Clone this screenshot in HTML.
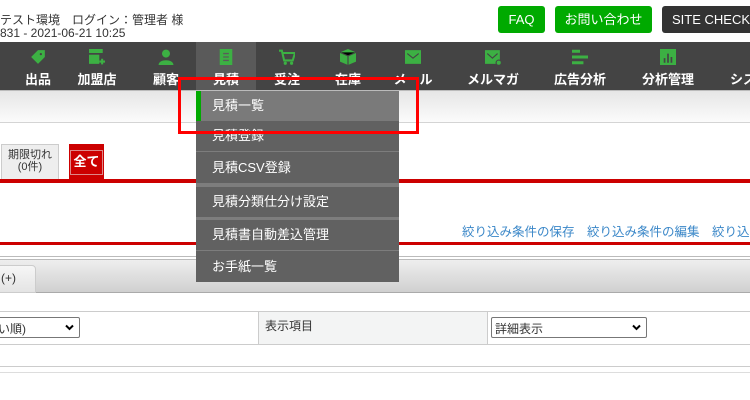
<!DOCTYPE html>
<html><head><meta charset="utf-8"><style>
*{margin:0;padding:0;box-sizing:border-box}
body{width:750px;height:400px;overflow:hidden;background:#fff;font-family:"Liberation Sans","Noto Sans CJK JP",sans-serif;position:relative;color:#333}
.a{position:absolute}
.btn{position:absolute;top:6px;height:27px;border-radius:3px;color:#fff;font-size:13px;line-height:27px;text-align:center}
.nav{position:absolute;top:42px;left:0;width:750px;height:48px;background:#444}
.ni{position:absolute;top:0;height:48px;color:#fff;font-size:13px;font-weight:bold;text-align:center}
.ni span{position:absolute;top:27px;left:0;right:0;white-space:nowrap}
.ic{position:absolute;top:7px;left:50%;margin-left:-8px;width:16px;height:16px}
.dd{position:absolute;left:196px;top:91px;width:203px;height:191px;background:#616161}
.di{position:absolute;left:0;width:203px;color:#fff;font-size:13px;padding-left:16px}
.sep{position:absolute;left:0;width:203px;background:#7d7d7d}
.chev{position:absolute;right:5px;top:6px;width:9px;height:7px}
</style></head><body>
<div class="a" style="left:0;top:11px;font-size:12px">テスト環境　ログイン：管理者 様</div>
<div class="a" style="left:0;top:26px;font-size:12px">831 - 2021-06-21 10:25</div>
<div class="btn" style="left:498px;width:47px;background:#0a0">FAQ</div>
<div class="btn" style="left:555px;width:97px;background:#0a0">お問い合わせ</div>
<div class="btn" style="left:662px;width:100px;background:#333;text-align:left;padding-left:10px">SITE CHECK</div>

<div class="nav">
<div class="ni" style="left:0;width:76px"><svg class="ic" viewBox="0 0 14 14"><path d="M1 7L7 1H13V7L7 13Z" fill="#3cb043"/><circle cx="9.5" cy="4.5" r="1" fill="#444"/></svg><span>出品</span></div>
<div class="ni" style="left:66px;width:62px"><svg class="ic" viewBox="0 0 14 14"><rect x="0" y="0" width="12" height="3.5" fill="#3cb043"/><rect x="0" y="5" width="9" height="8" fill="#3cb043"/><path d="M9 11h5M11.5 8.5v5" stroke="#3cb043" stroke-width="1.8"/></svg><span>加盟店</span></div>
<div class="ni" style="left:136px;width:60px"><svg class="ic" viewBox="0 0 14 14"><circle cx="7" cy="4" r="3.5" fill="#3cb043"/><path d="M0.5 14C0.5 8.5 13.5 8.5 13.5 14Z" fill="#3cb043"/></svg><span>顧客</span></div>
<div class="ni" style="left:196px;width:60px;background:#5a5a5a"><svg class="ic" viewBox="0 0 14 14"><rect x="1.5" y="0" width="11" height="14" fill="#3cb043"/><path d="M4.5 4h5M4.5 7h5M4.5 10h5" stroke="#5a5a5a" stroke-width="1.2"/></svg><span>見積</span></div>
<div class="ni" style="left:256px;width:62px"><svg class="ic" viewBox="0 0 14 14"><path d="M0 1.5h2.5l2 8.5h7.5l2-6.5H3.5" fill="none" stroke="#3cb043" stroke-width="1.8"/><circle cx="5.5" cy="12.5" r="1.4" fill="#3cb043"/><circle cx="11" cy="12.5" r="1.4" fill="#3cb043"/></svg><span>受注</span></div>
<div class="ni" style="left:318px;width:60px"><svg class="ic" viewBox="0 0 14 14"><path d="M7 0L14 3V11L7 14L0 11V3Z" fill="#3cb043"/><path d="M0 3L7 6L14 3M7 6V14" stroke="#444" stroke-width="1"/></svg><span>在庫</span></div>
<div class="ni" style="left:380px;width:66px"><svg class="ic" viewBox="0 0 14 14"><rect x="0" y="1" width="14" height="12" fill="#3cb043"/><path d="M2 4L7 8L12 4" fill="none" stroke="#444" stroke-width="1"/></svg><span>メール</span></div>
<div class="ni" style="left:456px;width:74px"><svg class="ic" viewBox="0 0 14 14"><rect x="0" y="1" width="13" height="12" fill="#3cb043"/><path d="M2 4L6.5 8L11 4" fill="none" stroke="#444" stroke-width="1"/><circle cx="12" cy="12" r="2.3" fill="#3cb043" stroke="#444"/></svg><span>メルマガ</span></div>
<div class="ni" style="left:540px;width:80px"><svg class="ic" viewBox="0 0 14 14"><path d="M0 2h7M0 7h14M0 12h10" stroke="#3cb043" stroke-width="2.6"/></svg><span>広告分析</span></div>
<div class="ni" style="left:628px;width:80px"><svg class="ic" viewBox="0 0 14 14"><rect x="0" y="0" width="14" height="14" fill="#3cb043"/><path d="M4 12V8M7 12V4M10 12V7" stroke="#444" stroke-width="1.5"/></svg><span>分析管理</span></div>
<div class="ni" style="left:720px;width:60px;text-align:left"><span style="left:10px">システム</span></div>
</div>

<div class="a" style="left:0;top:90px;width:750px;height:33px;background:linear-gradient(#e6e6e6,#fbfbfb);border-top:1px solid #bbb;border-bottom:1px solid #d4d4d4"></div>

<div class="a" style="left:1px;top:144px;width:58px;height:36px;background:#eee;border:1px solid #ccc;font-size:11px;text-align:center;line-height:12px;padding-top:4px">期限切れ<br>(0件)</div>
<div class="a" style="left:69px;top:144px;width:35px;height:36px;background:#c00;"></div>
<div class="a" style="left:70px;top:150px;width:33px;height:25px;background:#c00;border:1px solid #d88;color:#fff;font-weight:bold;font-size:13px;text-align:center;line-height:22px">全て</div>
<div class="a" style="left:0;top:179px;width:750px;height:4px;background:#c00"></div>

<div class="a" style="left:462px;top:221px;font-size:12.5px;color:#3a87c8;white-space:nowrap;word-spacing:10px">絞り込み条件の保存　絞り込み条件の編集　絞り込み</div>
<div class="a" style="left:0;top:242px;width:750px;height:3px;background:#c00"></div>
<div class="a" style="left:0;top:256px;width:750px;height:1px;background:#bbb"></div>
<div class="a" style="left:0;top:259px;width:750px;height:34px;background:linear-gradient(#eee,#d0d0d0);border-top:1px solid #bbb;border-bottom:1px solid #aaa"></div>
<div class="a" style="left:-5px;top:265px;width:41px;height:28px;background:linear-gradient(#f6f6f6,#e4e4e4);border:1px solid #ccc;border-radius:4px 4px 0 0;font-size:12px;padding:5px 0 0 5px">(+)</div>

<div class="a" style="left:0;top:311px;width:750px;height:34px;border-top:1px solid #ccc;border-bottom:1px solid #ccc"></div>
<div class="a" style="left:258px;top:312px;width:230px;height:32px;background:#f3f4f4;border-left:1px solid #ccc;border-right:1px solid #ccc;font-size:12px;padding:5px 0 0 6px">表示項目</div>
<div class="a" style="left:-3px;top:317px;width:83px;height:21px;border:1px solid #777;border-radius:2px;font-size:12px;padding:2px 0 0 0">い順)<svg class="chev" viewBox="0 0 9 7"><path d="M1 1.5L4.5 5L8 1.5" fill="none" stroke="#000" stroke-width="2"/></svg></div>
<div class="a" style="left:491px;top:317px;width:156px;height:21px;border:1px solid #777;border-radius:2px;font-size:12px;padding:2px 0 0 3px">詳細表示<svg class="chev" viewBox="0 0 9 7"><path d="M1 1.5L4.5 5L8 1.5" fill="none" stroke="#000" stroke-width="2"/></svg></div>
<div class="a" style="left:0;top:366px;width:750px;height:1px;background:#ccc"></div>
<div class="a" style="left:0;top:372px;width:750px;height:1px;background:#ddd"></div>

<div class="dd">
<div class="di" style="top:0;height:30px;background:#7a7a7a;line-height:30px;border-left:5px solid #0a0;padding-left:11px">見積一覧</div>
<div class="di" style="top:30px;height:30px;line-height:30px">見積登録</div>
<div class="sep" style="top:60px;height:1px"></div>
<div class="di" style="top:61px;height:31px;line-height:31px">見積CSV登録</div>
<div class="sep" style="top:92px;height:4px"></div>
<div class="di" style="top:96px;height:30px;line-height:30px">見積分類仕分け設定</div>
<div class="sep" style="top:126px;height:3px"></div>
<div class="di" style="top:129px;height:30px;line-height:30px">見積書自動差込管理</div>
<div class="sep" style="top:159px;height:1px"></div>
<div class="di" style="top:160px;height:31px;line-height:31px">お手紙一覧</div>
</div>

<div class="a" style="left:178px;top:77px;width:241px;height:57px;border:3px solid #f00"></div>
</body></html>
